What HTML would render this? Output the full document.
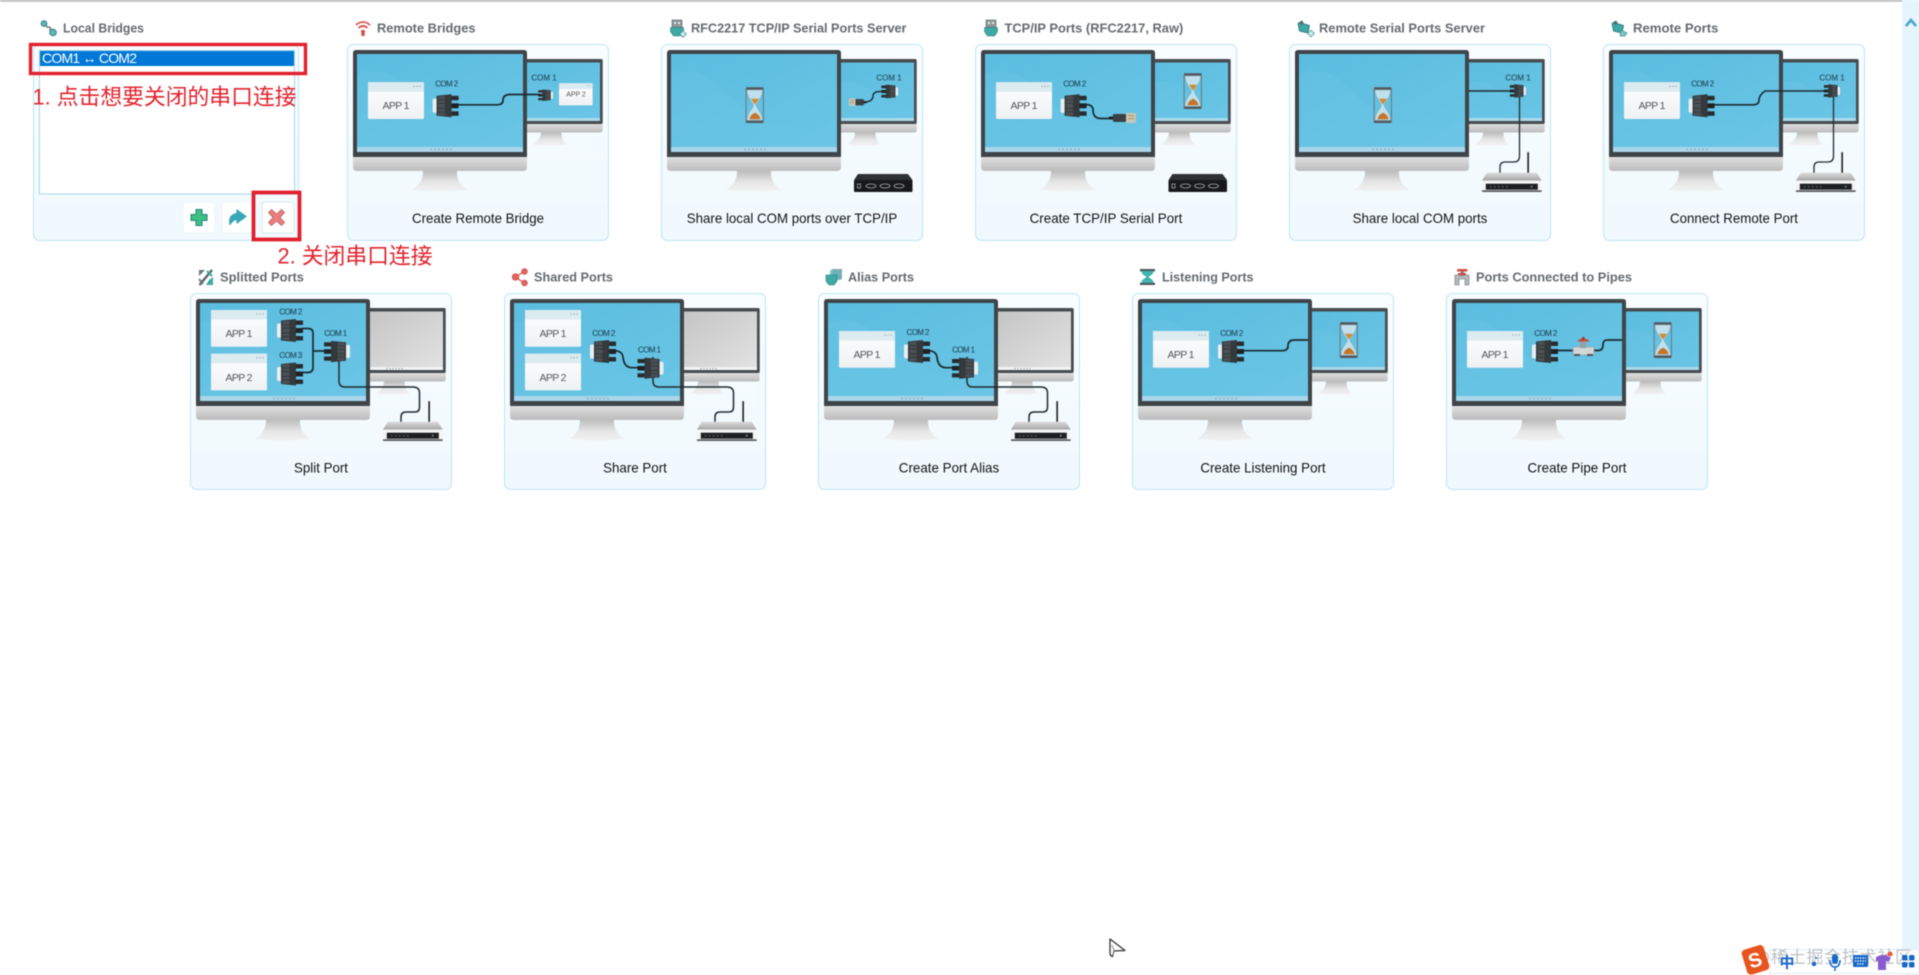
<!DOCTYPE html>
<html lang="zh-CN">
<head>
<meta charset="utf-8">
<title>Serial Ports</title>
<style>
html,body{margin:0;padding:0;background:#fff;width:1919px;height:975px;overflow:hidden}
svg{position:absolute;left:0;top:0;display:block;filter:blur(.4px)}
.h{font:bold 13px "Liberation Sans",sans-serif;fill:#666b6e}
.l{font:14px "Liberation Sans",sans-serif;fill:#111;text-anchor:middle}
.a{font:10.5px "Liberation Sans",sans-serif;fill:#555;text-anchor:middle}
.c{font:8px "Liberation Sans",sans-serif;fill:#234a5c;stroke:#234a5c;stroke-width:.12;text-anchor:middle}
.r{font:22px "Liberation Sans","Noto Sans CJK SC",sans-serif;fill:#e2232e}
</style>
</head>
<body>
<svg width="1919" height="975" viewBox="0 0 1919 975" xmlns="http://www.w3.org/2000/svg">
<defs>
<linearGradient id="cg" x1="0" y1="0" x2="0" y2="1"><stop offset="0" stop-color="#f9fdff"/><stop offset="1" stop-color="#f0f9fe"/></linearGradient>
<linearGradient id="sc" x1="0" y1="0" x2="1" y2="1"><stop offset="0" stop-color="#5bbde0"/><stop offset="1" stop-color="#6ac5e5"/></linearGradient>
<linearGradient id="ch" x1="0" y1="0" x2="0" y2="1"><stop offset="0" stop-color="#e2e2e2"/><stop offset="1" stop-color="#bcbcbc"/></linearGradient>
<linearGradient id="st" x1="0" y1="0" x2="0" y2="1"><stop offset="0" stop-color="#bdbdbd"/><stop offset=".55" stop-color="#e6e6e6"/><stop offset="1" stop-color="#f2f2f2"/></linearGradient>
<linearGradient id="gs" x1="0" y1="0" x2="1" y2="1"><stop offset="0" stop-color="#c4c4c4"/><stop offset="1" stop-color="#e2e2e2"/></linearGradient>
<linearGradient id="ap" x1="0" y1="0" x2="0" y2="1"><stop offset="0" stop-color="#fff"/><stop offset="1" stop-color="#eef1f3"/></linearGradient>
<linearGradient id="rt" x1="0" y1="0" x2="0" y2="1"><stop offset="0" stop-color="#dcdcdc"/><stop offset="1" stop-color="#a6a6a6"/></linearGradient>

<g id="stand2">
  <path d="M194 88.500H214.500C214.500 94 216 98 220 100.500Q203 103 186 100.500C190 98 194 94 194 88.500Z" fill="url(#st)"/>
  <path d="M176 79H255.700V86Q255.700 88.500 253 88.500H176Z" fill="url(#ch)"/>
  <rect x="176" y="15" width="79.700" height="65" rx="1.500" fill="#474c50"/>
</g>
<g id="sec">
  <use href="#stand2"/>
  <rect x="176" y="18.500" width="77" height="55.500" fill="url(#sc)"/>
  <path d="M176 38Q200 34 215 52T253 62V74H176Z" fill="#6cc6e5" opacity=".4"/>
  <rect x="176" y="74" width="77" height="3" fill="#abd9ea"/>
</g>
<g id="secG">
  <use href="#stand2"/>
  <rect x="176" y="18.500" width="77" height="55.500" fill="url(#gs)"/>
  <rect x="176" y="74" width="77" height="3" fill="#f1f3f4"/>
  <g fill="#8b9498"><circle cx="197" cy="75.500" r=".6"/><circle cx="200" cy="75.500" r=".6"/><circle cx="203" cy="75.500" r=".6"/><circle cx="206" cy="75.500" r=".6"/><circle cx="209" cy="75.500" r=".6"/><circle cx="212" cy="75.500" r=".6"/></g>
</g>
<g id="main">
  <path d="M76 127H110C110 135 112 141 121 146Q93 149 65 146C73 141 76 135 76 127Z" fill="url(#st)"/>
  <path d="M6 112H180V123Q180 127 176 127H10Q6 127 6 123Z" fill="url(#ch)"/>
  <path d="M6 113V9Q6 6 9 6H177Q180 6 180 9V113Z" fill="#3f4448"/>
  <rect x="10" y="10" width="166" height="93" fill="url(#sc)"/>
  <path d="M10 30Q40 20 62 46T130 84Q160 90 176 72V103H10Z" fill="#6cc6e5" opacity=".4"/>
  <rect x="10" y="103" width="166" height="5" fill="#a9d6ea"/>
  <g fill="#7f9aa8"><circle cx="84" cy="105.500" r=".8"/><circle cx="88" cy="105.500" r=".8"/><circle cx="92" cy="105.500" r=".8"/><circle cx="96" cy="105.500" r=".8"/><circle cx="100" cy="105.500" r=".8"/><circle cx="104" cy="105.500" r=".8"/></g>
</g>
<g id="app">
  <rect width="56" height="36.700" rx="1" fill="url(#ap)"/>
  <rect width="56" height="9.500" fill="#dcebf0"/>
  <g fill="#a8b4ba"><circle cx="46" cy="4" r=".8"/><circle cx="49" cy="4" r=".8"/><circle cx="52" cy="4" r=".8"/></g>
</g>
<g id="port">
  <rect x="0" y="5.500" width="4.500" height="14" rx="1.500" fill="#e9eef1"/>
  <rect x="14" y="2.500" width="12" height="4.500" fill="#292c2f"/>
  <rect x="14" y="18" width="12" height="4.500" fill="#292c2f"/>
  <rect x="16" y="10" width="10" height="5" fill="#1f2224"/>
  <path d="M4 2.500L19 1V24L4 22.500Z" fill="#34393c"/>
  <rect x="5.500" y="3" width="7" height="19" fill="#4a5053"/>
  <path d="M5.500 6.500H12.500M5.500 10H12.500M5.500 15H12.500M5.500 18.500H12.500" stroke="#2b2f32" stroke-width=".7"/>
</g>
<g id="rj">
  <rect x="0" y="3.500" width="5" height="3" fill="#222"/>
  <rect x="4" y="1" width="13" height="8" rx="1" fill="#3b4043"/>
  <rect x="17" y="0" width="10" height="10" rx="1" fill="#c2c7bf"/>
  <rect x="19" y="2" width="6" height="1.200" fill="#c9974e"/>
  <rect x="19" y="5" width="6" height="1.200" fill="#c9974e"/>
</g>
<g id="hg">
  <path d="M2 2.500H17.500C17.500 10 12 14 11 18C12 22 17.500 26 17.500 33H2C2 26 7.500 22 8.500 18C7.500 14 2 10 2 2.500Z" fill="#bfe0ec" stroke="#8fa6b0" stroke-width=".5"/>
  <path d="M6 11.500H14L10 17.500Z" fill="#d08a32"/>
  <path d="M4.500 32C5 28 8 26.500 10 25.500C12 26.500 15 28 15.500 32Z" fill="#c4752a"/>
  <rect x="1" y="0" width="17.500" height="2.400" rx=".6" fill="#50585d"/>
  <rect x="1" y="33.300" width="17.500" height="2.400" rx=".6" fill="#50585d"/>
  <rect x=".6" y="1" width="1" height="34" fill="#6a757b"/>
  <rect x="17.900" y="1" width="1" height="34" fill="#6a757b"/>
</g>
<g id="router">
  <rect x="45.500" y="-20.500" width="1.700" height="21" fill="#26292b"/>
  <path d="M5 0H55L60 8H0Z" fill="url(#rt)"/>
  <rect x="0" y="8" width="60" height="3" fill="#f6f6f6"/>
  <rect x="0" y="11" width="60" height="6.500" fill="#f4f4f4"/>
  <rect x="4" y="11" width="52" height="6" fill="#1d2022"/>
  <rect x="0" y="17.500" width="60" height="1.800" rx=".9" fill="#5a5d60"/>
  <g fill="#8d9295"><circle cx="9" cy="14" r=".6"/><circle cx="13" cy="14" r=".6"/><circle cx="17" cy="14" r=".6"/><circle cx="21" cy="14" r=".6"/><circle cx="25" cy="14" r=".6"/><circle cx="50" cy="14" r=".9"/></g>
</g>
<g id="box">
  <path d="M4 0H54L58.500 6H0Z" fill="#2e3133"/>
  <rect x="0" y="6" width="58.500" height="12" rx="1" fill="#17191a"/>
  <rect x="3.500" y="10" width="3" height="4" fill="none" stroke="#b7bcbf" stroke-width=".7"/>
  <g fill="none" stroke="#a7adb0" stroke-width=".8"><ellipse cx="17" cy="12" rx="5" ry="2"/><ellipse cx="31" cy="12" rx="5" ry="2"/><ellipse cx="45" cy="12" rx="5" ry="2"/></g>
</g>
<g id="usb">
  <rect x="2" y="0" width="10" height="7.500" fill="#8f9598" stroke="#5f6669" stroke-width=".6"/>
  <rect x="4" y="2" width="2" height="2" fill="#e8ecee"/><rect x="8" y="2" width="2" height="2" fill="#e8ecee"/>
  <path d="M.5 7.500H13.500V11.500L10.500 16H3.500L.5 11.500Z" fill="#3fa9a5" stroke="#2b7a7d" stroke-width=".6"/>
</g>
<g id="puz">
  <path d="M1 3.500L5 1L6 3.500L12.500 5.500L11 13L2.500 11Z" fill="#3fa9a5" stroke="#2c6d75" stroke-width=".8"/>
  <path d="M3 2.500L6 1.500L6.500 4L3.500 5Z" fill="#5b6468"/>
</g>
<g id="cab2"><path d="M0 0V24Q0 30 6 30H74Q80.500 30 80.500 36V50Q80.500 55 76 55H67Q62 55 62 60V65" fill="none" stroke="#1f2b30" stroke-width="1.500"/></g>
</defs>

<rect width="1919" height="975" fill="#fff"/>
<rect x="0" y="0" width="1902" height="1.800" fill="#bcbcbc"/>
<rect x="1902" y="0" width="17" height="975" fill="#e6f4fc"/>
<path d="M1906 26L1911 20L1916 26" fill="none" stroke="#4aa3d2" stroke-width="2.600"/>

<!-- Local Bridges -->
<rect x="33.500" y="44.500" width="265" height="196" rx="6" fill="url(#cg)" stroke="#bde4f5"/>
<rect x="39.500" y="50.500" width="255" height="143.500" fill="#fff" stroke="#a9d5e8"/>
<rect x="40" y="51" width="254" height="15" fill="#0078d7"/>
<text x="42" y="63.200" font-family="Liberation Sans" font-size="14" fill="#fff" textLength="95">COM1 ↔ COM2</text>
<rect x="183" y="202" width="32" height="31" rx="3" fill="#fff" stroke="#eef4f7"/>
<rect x="222" y="202" width="32" height="31" rx="3" fill="#fff" stroke="#eef4f7"/>
<rect x="262" y="202" width="32" height="31" rx="3" fill="#fff" stroke="#dbe9f0"/>
<path d="M196 209.500h6v5h5v6h-5v5h-6v-5h-5v-6h5z" fill="#3fc083" stroke="#24807a" stroke-width="1"/>
<path d="M230 224.500Q228 215 237 213.500V210L246 216.500L237 223V219.500Q233 219.500 230 224.500Z" fill="#3aa7b8" stroke="#3aa7b8" stroke-width="1.200" stroke-linejoin="round"/>
<path d="M271.500 209.500L276.500 214L281.500 209.500L284.500 212.500L280 217.500L284.500 222.500L281.500 225.500L276.500 221L271.500 225.500L268.500 222.500L273 217.500L268.500 212.500Z" fill="#ea7f7f" stroke="#b85c5c" stroke-width=".8"/>

<g>
  <path d="M45 24L47 27Q52 27 50 30L52 33" fill="none" stroke="#6d7477" stroke-width="1.500"/>
  <circle cx="44" cy="23.500" r="2.800" fill="#5cb9b4" stroke="#35808a"/>
  <circle cx="53" cy="32.500" r="3.300" fill="#5cb9b4" stroke="#35808a"/>
</g>
<text class="h" x="63" y="32.700" textLength="81" lengthAdjust="spacingAndGlyphs">Local Bridges</text>

<!-- Row 1 -->
<g transform="translate(347,44)">
  <rect x=".5" y=".5" width="261" height="196" rx="6" fill="url(#cg)" stroke="#bde4f5"/>
  <use href="#sec"/>
  <use href="#app" transform="translate(212,39.300) scale(.6)"/>
  <text class="c" x="197" y="36.500">COM 1</text>
  <text class="a" style="font-size:7px" x="229" y="52.500" textLength="19.500">APP 2</text>
  <use href="#main"/>
  <use href="#app" x="21" y="38.300"/>
  <text class="a" x="49" y="64.800" textLength="27">APP 1</text>
  <text class="c" x="99.700" y="42.500" textLength="23">COM 2</text>
  <path d="M110 60.800H150Q156 60.800 156 56T162 50.500H193" fill="none" stroke="#1c2a30" stroke-width="1.700"/>
  <use href="#port" transform="translate(85.600,49.300)"/>
  <use href="#port" transform="translate(206,45) scale(-.57,.5)"/>
  <text class="l" x="131" y="179" textLength="132" lengthAdjust="spacingAndGlyphs">Create Remote Bridge</text>
</g>
<g transform="translate(661,44)">
  <rect x=".5" y=".5" width="261" height="196" rx="6" fill="url(#cg)" stroke="#bde4f5"/>
  <use href="#sec"/>
  <text class="c" x="228" y="36.500">COM 1</text>
  <path d="M221 47.500Q212 47 212 52Q212 57 205 58" fill="none" stroke="#1c2a30" stroke-width="1.400"/>
  <use href="#rj" transform="translate(205.500,54.300) scale(-.65,.78)"/>
  <use href="#port" transform="translate(237,40) scale(-.64,.6)"/>
  <use href="#main"/>
  <use href="#hg" x="84" y="43.300"/>
  <use href="#box" x="193" y="130"/>
  <text class="l" x="131" y="179" textLength="210.500" lengthAdjust="spacingAndGlyphs">Share local COM ports over TCP/IP</text>
</g>
<g transform="translate(975,44)">
  <rect x=".5" y=".5" width="261" height="196" rx="6" fill="url(#cg)" stroke="#bde4f5"/>
  <use href="#sec"/>
  <use href="#hg" x="208" y="29.300"/>
  <use href="#main"/>
  <use href="#app" x="21" y="38.300"/>
  <text class="a" x="49" y="64.800" textLength="27">APP 1</text>
  <text class="c" x="99.700" y="42.500" textLength="23">COM 2</text>
  <path d="M110 60.500Q118 60.500 118 66Q118 74.500 126 74.500H135" fill="none" stroke="#1c2a30" stroke-width="1.700"/>
  <use href="#port" transform="translate(85.600,49.300)"/>
  <use href="#rj" x="134" y="69"/>
  <use href="#box" x="193.500" y="130"/>
  <text class="l" x="131" y="179" textLength="152.700" lengthAdjust="spacingAndGlyphs">Create TCP/IP Serial Port</text>
</g>
<g transform="translate(1289,44)">
  <rect x=".5" y=".5" width="261" height="196" rx="6" fill="url(#cg)" stroke="#bde4f5"/>
  <use href="#sec"/>
  <text class="c" x="229" y="36.500">COM 1</text>
  <use href="#main"/>
  <use href="#hg" x="84" y="43.300"/>
  <path d="M180 47H222" fill="none" stroke="#1f2b30" stroke-width="1.500"/>
  <path d="M230.500 52V112Q230.500 118 225 118H216Q211 118 211 123V129" fill="none" stroke="#1f2b30" stroke-width="1.300"/>
  <use href="#port" transform="translate(237,39.700) scale(-.62,.58)"/>
  <use href="#router" x="192.800" y="128.700"/>
  <text class="l" x="131" y="179" textLength="134.700" lengthAdjust="spacingAndGlyphs">Share local COM ports</text>
</g>
<g transform="translate(1603,44)">
  <rect x=".5" y=".5" width="261" height="196" rx="6" fill="url(#cg)" stroke="#bde4f5"/>
  <use href="#sec"/>
  <text class="c" x="229" y="36.500">COM 1</text>
  <use href="#main"/>
  <use href="#app" x="21" y="38.300"/>
  <text class="a" x="49" y="64.800" textLength="27">APP 1</text>
  <text class="c" x="99.700" y="42.500" textLength="23">COM 2</text>
  <path d="M110 60.800H150Q156 60.800 156 56T162 47H222" fill="none" stroke="#1c2a30" stroke-width="1.600"/>
  <path d="M230.500 52V112Q230.500 118 225 118H216Q211 118 211 123V129" fill="none" stroke="#1f2b30" stroke-width="1.300"/>
  <use href="#port" transform="translate(85.600,49.300)"/>
  <use href="#port" transform="translate(237,39.700) scale(-.62,.58)"/>
  <use href="#router" x="192.800" y="128.700"/>
  <text class="l" x="131" y="179" textLength="128" lengthAdjust="spacingAndGlyphs">Connect Remote Port</text>
</g>

<!-- Row 2 -->
<g transform="translate(190,293)">
  <rect x=".5" y=".5" width="261" height="196" rx="6" fill="url(#cg)" stroke="#bde4f5"/>
  <use href="#secG"/>
  <use href="#main"/>
  <use href="#app" x="21" y="17"/>
  <use href="#app" x="21" y="60.700"/>
  <text class="a" x="49" y="44" textLength="27">APP 1</text>
  <text class="a" x="49" y="88" textLength="27">APP 2</text>
  <text class="c" x="100.800" y="21.500" textLength="23">COM 2</text>
  <text class="c" x="100.800" y="64.800" textLength="23">COM 3</text>
  <text class="c" x="145.700" y="43" textLength="23">COM 1</text>
  <path d="M112 35.500H118Q123 35.500 123 40V74Q123 79.500 118 79.500H112M123 58H135" fill="none" stroke="#1c2a30" stroke-width="1.700"/>
  <use href="#cab2" x="149" y="64"/>
  <use href="#port" transform="translate(87,25)"/>
  <use href="#port" transform="translate(87,68.500)"/>
  <use href="#port" transform="translate(160,47) scale(-1,.92)"/>
  <use href="#router" x="192.800" y="128.700"/>
  <text class="l" x="131" y="179.500" textLength="54" lengthAdjust="spacingAndGlyphs">Split Port</text>
</g>
<g transform="translate(504,293)">
  <rect x=".5" y=".5" width="261" height="196" rx="6" fill="url(#cg)" stroke="#bde4f5"/>
  <use href="#secG"/>
  <use href="#main"/>
  <use href="#app" x="21" y="17"/>
  <use href="#app" x="21" y="60.700"/>
  <text class="a" x="49" y="44" textLength="27">APP 1</text>
  <text class="a" x="49" y="88" textLength="27">APP 2</text>
  <text class="c" x="99.800" y="43" textLength="23">COM 2</text>
  <text class="c" x="145.500" y="59.500" textLength="23">COM 1</text>
  <path d="M110 57.700Q118 57.700 119 64Q120 74.700 128 74.700H135" fill="none" stroke="#1c2a30" stroke-width="1.700"/>
  <use href="#cab2" x="149" y="64"/>
  <use href="#port" transform="translate(86,46)"/>
  <use href="#port" transform="translate(159.500,63.700) scale(-1,.92)"/>
  <use href="#router" x="192.800" y="128.700"/>
  <text class="l" x="131" y="179.500" textLength="63.700" lengthAdjust="spacingAndGlyphs">Share Port</text>
</g>
<g transform="translate(818,293)">
  <rect x=".5" y=".5" width="261" height="196" rx="6" fill="url(#cg)" stroke="#bde4f5"/>
  <use href="#secG"/>
  <use href="#main"/>
  <use href="#app" x="21" y="38"/>
  <text class="a" x="49" y="64.800" textLength="27">APP 1</text>
  <text class="c" x="100" y="42.200" textLength="23">COM 2</text>
  <text class="c" x="145.600" y="59.500" textLength="23">COM 1</text>
  <path d="M110 57.700Q118 57.700 119 64Q120 74.700 128 74.700H135" fill="none" stroke="#1c2a30" stroke-width="1.700"/>
  <use href="#cab2" x="149" y="64"/>
  <use href="#port" transform="translate(86,46)"/>
  <use href="#port" transform="translate(160,63.700) scale(-1,.92)"/>
  <use href="#router" x="192.800" y="128.700"/>
  <text class="l" x="131" y="179.500" textLength="100.400" lengthAdjust="spacingAndGlyphs">Create Port Alias</text>
</g>
<g transform="translate(1132,293)">
  <rect x=".5" y=".5" width="261" height="196" rx="6" fill="url(#cg)" stroke="#bde4f5"/>
  <use href="#sec"/>
  <use href="#hg" x="207" y="29.300"/>
  <use href="#main"/>
  <use href="#app" x="21" y="38"/>
  <text class="a" x="49" y="64.800" textLength="27">APP 1</text>
  <text class="c" x="99.800" y="43" textLength="23">COM 2</text>
  <path d="M110 57.700H150Q156 57.700 156 53Q156 47 162 47H176" fill="none" stroke="#1c2a30" stroke-width="1.700"/>
  <use href="#port" transform="translate(86,46)"/>
  <text class="l" x="131" y="179.500" textLength="125.300" lengthAdjust="spacingAndGlyphs">Create Listening Port</text>
</g>
<g transform="translate(1446,293)">
  <rect x=".5" y=".5" width="261" height="196" rx="6" fill="url(#cg)" stroke="#bde4f5"/>
  <use href="#sec"/>
  <use href="#hg" x="207" y="29.300"/>
  <use href="#main"/>
  <use href="#app" x="21" y="38"/>
  <text class="a" x="49" y="64.800" textLength="27">APP 1</text>
  <text class="c" x="99.800" y="43" textLength="23">COM 2</text>
  <path d="M110 57.500H152Q157 57.500 157 52T162 47H176" fill="none" stroke="#1c2a30" stroke-width="1.700"/>
  <use href="#port" transform="translate(86,46)"/>
  <g>
    <rect x="127" y="54" width="21" height="8" rx="1" fill="#d2d6d8" stroke="#8d9498" stroke-width=".6"/>
    <rect x="134" y="48" width="6" height="7" fill="#9a9fa2"/>
    <path d="M131 48.500Q137 42 144 48.500Z" fill="#c84b3c"/>
    <rect x="136" y="44" width="2.500" height="3" fill="#a8382c"/>
    <rect x="128" y="61" width="6" height="2" fill="#555"/><rect x="141" y="61" width="6" height="2" fill="#555"/>
  </g>
  <text class="l" x="131" y="179.500" textLength="99" lengthAdjust="spacingAndGlyphs">Create Pipe Port</text>
</g>

<!-- Headings -->
<g fill="none" stroke="#d9534f" stroke-width="1.800"><path d="M356 25Q363 19 370 25"/><path d="M358.500 28Q363 24 367.500 28"/></g>
<path d="M361 30H365L364.500 36H361.500Z" fill="#c9514e"/>
<text class="h" x="377" y="32.700" textLength="98.500" lengthAdjust="spacingAndGlyphs">Remote Bridges</text>

<use href="#usb" x="670" y="20"/>
<path d="M680 33h2v-2h2v2h2v2h-2v2h-2v-2h-2z" fill="#fff" stroke="#3a9496" stroke-width=".7"/>
<text class="h" x="691" y="32.700" textLength="215.500" lengthAdjust="spacingAndGlyphs">RFC2217 TCP/IP Serial Ports Server</text>

<use href="#usb" x="984" y="20"/>
<text class="h" x="1004.500" y="32.700" textLength="178.800" lengthAdjust="spacingAndGlyphs">TCP/IP Ports (RFC2217, Raw)</text>

<use href="#puz" x="1297" y="20"/>
<path d="M1308 32.500h2v-2h2v2h2v2h-2v2h-2v-2h-2z" fill="#fff" stroke="#3a9496" stroke-width=".7"/>
<text class="h" x="1319" y="32.700" textLength="166" lengthAdjust="spacingAndGlyphs">Remote Serial Ports Server</text>

<use href="#puz" x="1611" y="20"/>
<path d="M1621 30L1627 33L1625 36H1620Z" fill="#7fc5c6" stroke="#3a9496" stroke-width=".7"/>
<text class="h" x="1633" y="32.700" textLength="85.500" lengthAdjust="spacingAndGlyphs">Remote Ports</text>

<g>
  <path d="M199 270H205L201 274L199 276Z" fill="#6e7578"/>
  <path d="M213 285H206L209 280L213 277Z" fill="#3fa9a5"/>
  <path d="M212 270L199.500 285" stroke="#5a6165" stroke-width="2.400" fill="none"/>
  <path d="M199 279l4 5" stroke="#6e7578" stroke-width="2" fill="none"/>
  <path d="M207 271l5 5" stroke="#3fa9a5" stroke-width="2" fill="none"/>
</g>
<text class="h" x="220" y="281.700" textLength="84" lengthAdjust="spacingAndGlyphs">Splitted Ports</text>

<g stroke="#d9534f" stroke-width="1.300" fill="#dd6a63"><path d="M515.500 277L524 271.500M515.500 277L524 283" fill="none"/><circle cx="515.500" cy="277" r="3"/><circle cx="524.500" cy="271.500" r="2.600"/><circle cx="524.500" cy="283" r="2.600"/></g>
<text class="h" x="534" y="281.700" textLength="79" lengthAdjust="spacingAndGlyphs">Shared Ports</text>

<g>
  <rect x="832" y="269" width="10" height="10" fill="#9aa0a3"/>
  <path d="M830 270h11v10h-11z" fill="#5db9c0" opacity=".8"/>
  <path d="M826 275H837V281L834 285H829L826 281Z" fill="#3fa9a5" stroke="#2b7a7d" stroke-width=".6"/>
</g>
<text class="h" x="848" y="281.700" textLength="66" lengthAdjust="spacingAndGlyphs">Alias Ports</text>

<g>
  <rect x="1140" y="269" width="15" height="2.400" fill="#4e555a"/><rect x="1140" y="282.600" width="15" height="2.400" fill="#4e555a"/>
  <path d="M1141.500 271H1153.500C1153.500 275 1149 276 1148.500 277C1149 278 1153.500 279 1153.500 283H1141.500C1141.500 279 1146 278 1146.500 277C1146 276 1141.500 275 1141.500 271Z" fill="#3fb3ac"/>
</g>
<text class="h" x="1162" y="281.700" textLength="91.500" lengthAdjust="spacingAndGlyphs">Listening Ports</text>

<g>
  <path d="M1455 275H1469V285H1465V279H1459V285H1455Z" fill="#b3b8ba" stroke="#6b7275" stroke-width=".6"/>
  <rect x="1460.500" y="271" width="3.500" height="5" fill="#888e91"/>
  <rect x="1457" y="269" width="10.500" height="2.500" rx=".8" fill="#d64a3f"/>
  <rect x="1458" y="273" width="8" height="2" fill="#c44"/>
</g>
<text class="h" x="1476" y="281.700" textLength="156" lengthAdjust="spacingAndGlyphs">Ports Connected to Pipes</text>

<!-- Annotations -->
<rect x="30.500" y="44.500" width="275" height="29" fill="none" stroke="#e2202e" stroke-width="3.400"/>
<rect x="253.500" y="192.500" width="46" height="47" fill="none" stroke="#e2202e" stroke-width="3.800"/>
<text class="r" x="32.500" y="104.500" textLength="264" lengthAdjust="spacingAndGlyphs">1. 点击想要关闭的串口连接</text>
<text class="r" x="277.500" y="263.500" textLength="155" lengthAdjust="spacingAndGlyphs">2. 关闭串口连接</text>

<!-- Cursor -->
<path d="M1110 939L1125 950.500L1114 951L1112.500 956.500Q1110 956 1110 953Z" fill="#fff" stroke="#333" stroke-width="1.300" stroke-linejoin="round"/>
<path d="M1112 945L1114 950.500L1113 955" fill="none" stroke="#888" stroke-width="1"/>

<!-- IME toolbar -->
<rect x="1770" y="949.500" width="149" height="24" fill="#fff" stroke="#e3edf6"/>
<text x="1753" y="963" font-family="Liberation Sans,Noto Sans CJK SC,sans-serif" font-size="17" fill="#a6acaf" opacity=".75" textLength="159">@稀土掘金技术社区</text>
<g transform="rotate(-17 1755 960)">
  <rect x="1744" y="947" width="23" height="26" rx="4" fill="#e8541e"/>
  <text x="1755" y="967" font-family="Liberation Sans,sans-serif" font-weight="bold" font-size="20" fill="#fff" text-anchor="middle">S</text>
</g>
<text x="1787" y="967.500" font-family="Liberation Sans,Noto Sans CJK SC,sans-serif" font-weight="bold" font-size="15" fill="#1668c8" text-anchor="middle">中</text>
<circle cx="1814" cy="964" r="2.200" fill="#1668c8"/><circle cx="1816" cy="958" r="1" fill="#1668c8"/>
<rect x="1832" y="954" width="6" height="10" rx="3" fill="#1668c8"/><path d="M1830 960Q1830 967 1835 967T1840 960M1835 967V971" fill="none" stroke="#1668c8" stroke-width="1.500"/>
<rect x="1853" y="955" width="15" height="12" rx="1" fill="#1668c8"/><path d="M1855 958h11M1855 961h11M1857 964h7" stroke="#fff" stroke-width="1.200" stroke-dasharray="1.500 1" fill="none"/>
<path d="M1876 957L1881 955L1886 955L1891 958L1888 962L1886 961V970H1878V961L1876 962Z" fill="#8a5bd0"/><circle cx="1890" cy="954" r="2.500" fill="#ea5a3c"/>
<g fill="#1668c8"><rect x="1902" y="955" width="5.500" height="5.500" rx="1.500"/><rect x="1909" y="955" width="5.500" height="5.500" rx="1.500"/><rect x="1902" y="962" width="5.500" height="5.500" rx="1.500"/><rect x="1909" y="962" width="5.500" height="5.500" rx="1.500"/></g>
</svg>
</body>
</html>
